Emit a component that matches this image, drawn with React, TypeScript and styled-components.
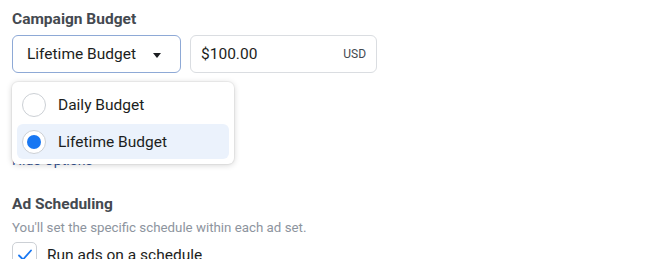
import React from "react";
import styled, { createGlobalStyle } from "styled-components";

const Global = createGlobalStyle`
  html, body { margin: 0; padding: 0; background: #fff; }
  body { font-family: Roboto, "Liberation Sans", Arial, sans-serif; color: #1c1e21; -webkit-font-smoothing: antialiased; }
  * { box-sizing: border-box; }
`;

const Page = styled.div`
  position: relative;
  width: 650px;
  height: 259px;
  overflow: hidden;
  padding: 9px 12px 0 12px;
`;

const Heading = styled.div`
  font-size: 15.5px;
  font-weight: 700;
  color: #444950;
  line-height: 20px;
`;

const Row = styled.div`
  display: flex;
  gap: 9px;
  margin-top: 6px;
`;

const Select = styled.div`
  width: 169px;
  height: 38px;
  border: 1px solid #8ea9d6;
  border-radius: 6px;
  display: flex;
  align-items: center;
  justify-content: space-between;
  padding: 0 19px 0 14px;
  font-size: 15.5px;
  color: #1c1e21;
`;

const Caret = styled.span`
  width: 0;
  height: 0;
  border-left: 4.5px solid transparent;
  border-right: 4.5px solid transparent;
  border-top: 5px solid #1c1e21;
  margin-top: 2px;
`;

const Input = styled.div`
  width: 187px;
  height: 38px;
  border: 1px solid #dadde1;
  border-radius: 6px;
  display: flex;
  align-items: center;
  justify-content: space-between;
  padding: 0 10px 0 10px;
  font-size: 15.5px;
`;

const Currency = styled.span`
  font-size: 12px;
  color: #444950;
`;

const Link = styled.div`
  margin-top: 79px;
  font-size: 14px;
  color: #385898;
  line-height: 16px;
`;

const Section = styled.div`
  margin-top: 26px;
`;

const Desc = styled.div`
  font-size: 13.3px;
  color: #8d949e;
  margin-top: 6px;
  line-height: 16px;
`;

const CheckRow = styled.div`
  display: flex;
  align-items: center;
  gap: 10px;
  margin-top: 6px;
  font-size: 15.5px;
`;

const CheckBox = styled.div`
  width: 25px;
  height: 25px;
  flex: none;
  border: 1px solid #ccd0d5;
  border-radius: 5px;
  display: flex;
  align-items: center;
  justify-content: center;
`;

const Menu = styled.div`
  position: absolute;
  left: 12px;
  top: 82px;
  width: 222px;
  height: 82px;
  background: #fff;
  border-radius: 6px;
  box-shadow: 0 1px 6px rgba(0, 0, 0, 0.18), 0 0 0 1px rgba(0, 0, 0, 0.04);
  padding: 5px 5px;
  display: flex;
  flex-direction: column;
`;

const Item = styled.div<{ $active?: boolean }>`
  height: 35px;
  display: flex;
  align-items: center;
  gap: 12px;
  padding-left: 5px;
  border-radius: 6px;
  font-size: 15.5px;
  color: #1c1e21;
  background: ${(p) => (p.$active ? "#ebf2fc" : "transparent")};
  & + & {
    margin-top: 2px;
  }
`;

const Radio = styled.span<{ $checked?: boolean }>`
  width: 24px;
  height: 24px;
  border-radius: 50%;
  border: 1px solid #ccd0d5;
  background: #fff;
  display: flex;
  align-items: center;
  justify-content: center;
  &::after {
    content: "";
    width: 14px;
    height: 14px;
    border-radius: 50%;
    background: ${(p) => (p.$checked ? "#1877f2" : "transparent")};
  }
`;

export default function App() {
  return (
    <>
      <Global />
      <Page>
        <Heading>Campaign Budget</Heading>
        <Row>
          <Select>
            <span>Lifetime Budget</span>
            <Caret />
          </Select>
          <Input>
            <span>$100.00</span>
            <Currency>USD</Currency>
          </Input>
        </Row>
        <Link>Hide Options</Link>
        <Section>
          <Heading>Ad Scheduling</Heading>
          <Desc>You'll set the specific schedule within each ad set.</Desc>
          <CheckRow>
            <CheckBox>
              <svg width="16" height="16" viewBox="0 0 16 16">
                <path d="M2 8.5 L6 12.5 L14 3.5" fill="none" stroke="#1877f2" strokeWidth="1.8" strokeLinecap="round" strokeLinejoin="round" />
              </svg>
            </CheckBox>
            <span>Run ads on a schedule</span>
          </CheckRow>
        </Section>
        <Menu>
          <Item>
            <Radio />
            <span>Daily Budget</span>
          </Item>
          <Item $active>
            <Radio $checked />
            <span>Lifetime Budget</span>
          </Item>
        </Menu>
      </Page>
    </>
  );
}
